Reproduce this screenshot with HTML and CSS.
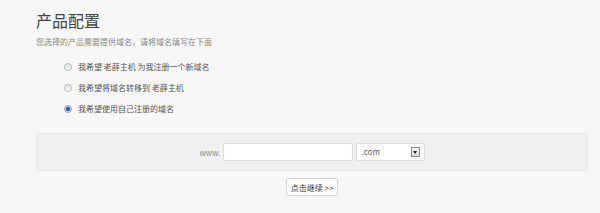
FILE: index.html
```html
<!DOCTYPE html>
<html lang="zh-CN">
<head>
    <meta charset="UTF-8">
    <title>产品配置</title>
    <link rel="stylesheet" href="styles.css">
</head>
<body>
    <div class="config-main">
        <h1 class="title">产品配置</h1>
        <p class="desc">您选择的产品需要提供域名，请将域名填写在下面</p>

        <div class="options">
            <label class="opt"><input type="radio" name="domainoption"><span>我希望 老薛主机 为我注册一个新域名</span></label>
            <label class="opt"><input type="radio" name="domainoption"><span>我希望将域名转移到 老薛主机</span></label>
            <label class="opt"><input type="radio" name="domainoption" checked><span>我希望使用自己注册的域名</span></label>
        </div>

        <div class="domain-box">
            <span class="www">www.</span>
            <input type="text" class="sld">
            <span class="tld">
                <select>
                    <option>.com</option>
                    <option>.net</option>
                    <option>.cn</option>
                </select>
                <span class="arrow"></span>
            </span>
        </div>

        <div class="actions">
            <button class="btn">点击继续 &gt;&gt;</button>
        </div>
    </div>
</body>
</html>
```

FILE: styles.css
```css
body {
    background-color: #f7f7f7;
    margin: 0;
}
* {
    font-family: "Noto Sans CJK SC", "Liberation Sans", sans-serif;
    box-sizing: border-box;
}
.config-main {
    padding: 8px 12px 0 36px;
}
.title {
    margin: 0;
    font-size: 16px;
    font-weight: normal;
    line-height: 24px;
    color: #444;
}
.desc {
    margin: 4px 0 0;
    font-size: 8px;
    line-height: 12px;
    color: #888;
}
.options {
    display: flex;
    flex-direction: column;
    gap: 9px;
    margin-top: 13px;
    padding-left: 28px;
}
.opt {
    display: flex;
    align-items: center;
    gap: 6px;
    font-size: 8px;
    line-height: 12px;
    color: #555;
}
.opt input {
    appearance: none;
    margin: 0;
    width: 8px;
    height: 8px;
    border: 1px solid #b9b9b9;
    border-radius: 50%;
    background: linear-gradient(#e2e2e2, #fbfbfb);
}
.opt input:checked {
    background: radial-gradient(circle, #2a63b8 0 1.6px, #7fa3d8 2.2px, #eef2f8 3px);
    border-color: #9aa6b8;
}
.domain-box {
    display: flex;
    justify-content: center;
    align-items: center;
    gap: 2px;
    margin-top: 18px;
    height: 38px;
    background-color: #f0f0f0;
    border: 1px solid #e6e6e6;
    border-radius: 3px;
}
.www {
    font-size: 8px;
    color: #888;
}
.sld {
    width: 130px;
    height: 18px;
    border: 1px solid #dcdcdc;
    border-radius: 2px;
    background: #fff;
    margin: 0;
}
.tld {
    position: relative;
    display: flex;
    margin-left: 1px;
}
.tld select {
    appearance: none;
    width: 69px;
    height: 18px;
    margin: 0;
    padding: 0 0 0 5px;
    border: 1px solid #dcdcdc;
    border-radius: 2px;
    background: #fff;
    font-size: 8px;
    line-height: 16px;
    color: #666;
}
.arrow {
    position: absolute;
    right: 5px;
    top: 4px;
    width: 9px;
    height: 10px;
    border: 1px solid #888;
    background: linear-gradient(#f4f4f4, #d8d8d8);
    pointer-events: none;
}
.arrow::after {
    content: "";
    position: absolute;
    left: 1px;
    top: 3px;
    border-left: 2.5px solid transparent;
    border-right: 2.5px solid transparent;
    border-top: 3px solid #222;
}
.actions {
    display: flex;
    justify-content: center;
    margin-top: 7px;
}
.btn {
    height: 18px;
    padding: 0 4px;
    font-size: 8px;
    color: #333;
    background: #fff;
    border: 1px solid #d6d6d6;
    border-radius: 2px;
}
```
